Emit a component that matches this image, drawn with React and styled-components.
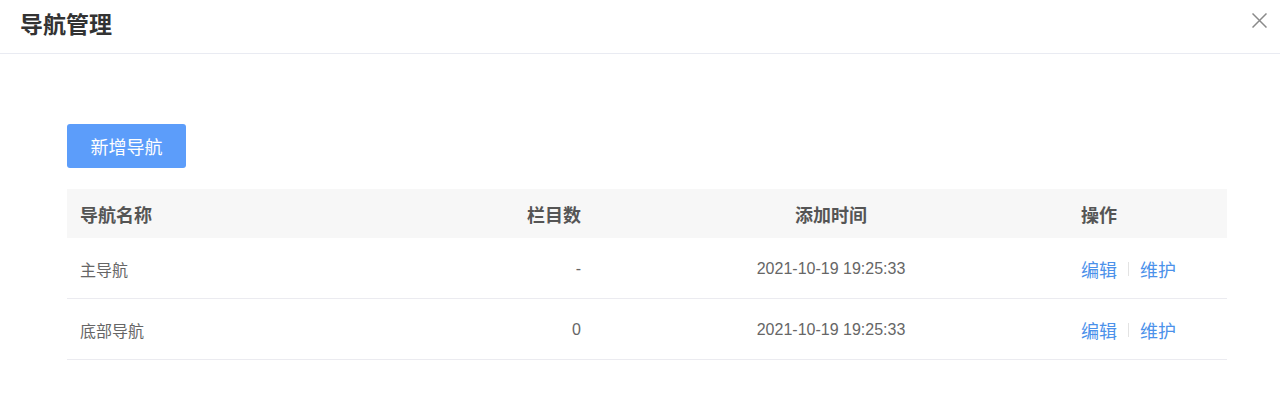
import styled, { createGlobalStyle } from "styled-components";

const GlobalStyle = createGlobalStyle`
    html, body {
        margin: 0;
        padding: 0;
        background: #ffffff;
    }
    body {
        font-family: "Liberation Sans", "Noto Sans CJK SC", sans-serif;
    }
`

const navList = [
    { id: 1, name: "主导航", count: "-", time: "2021-10-19 19:25:33" },
    { id: 2, name: "底部导航", count: "0", time: "2021-10-19 19:25:33" },
]

export default function App() {
    return (
        <>
            <GlobalStyle />
            <Page>
                <Header>
                    <Title>导航管理</Title>
                    <CloseButton aria-label="关闭">
                        <svg width="15" height="15" viewBox="0 0 15 15">
                            <path d="M0.5 0.5 L14.5 14.5 M14.5 0.5 L0.5 14.5" stroke="#8a8a8a" strokeWidth="1.5" fill="none" />
                        </svg>
                    </CloseButton>
                </Header>
                <Body>
                    <AddButton>新增导航</AddButton>
                    <Table>
                        <HeadRow>
                            <Cell>导航名称</Cell>
                            <Cell align="right">栏目数</Cell>
                            <Cell align="center">添加时间</Cell>
                            <Cell>操作</Cell>
                        </HeadRow>
                        {navList.map((n) => (
                            <Row key={n.id}>
                                <Cell>{n.name}</Cell>
                                <Cell align="right">{n.count}</Cell>
                                <Cell align="center">{n.time}</Cell>
                                <Cell>
                                    <Action>编辑</Action>
                                    <Divider />
                                    <Action>维护</Action>
                                </Cell>
                            </Row>
                        ))}
                    </Table>
                </Body>
            </Page>
        </>
    )
}

const Page = styled.div`
    width: 1280px;
    height: 417px;
    background: #fff;
`

const Header = styled.header`
    height: 53px;
    border-bottom: 1px solid #e9ebf2;
    display: flex;
    align-items: center;
    justify-content: space-between;
    padding: 0 13px 0 20px;
`

const Title = styled.h1`
    margin: 0;
    font-size: 23px;
    font-weight: 700;
    color: #333;
    font-family: "Noto Sans CJK SC", sans-serif;
    line-height: 1;
    padding-bottom: 6px;
`

const CloseButton = styled.button`
    border: none;
    background: none;
    padding: 0;
    width: 15px;
    height: 15px;
    margin-bottom: 13px;
    display: flex;
`

const Body = styled.div`
    padding: 70px 53px 0 67px;
`

const AddButton = styled.button`
    width: 119px;
    height: 44px;
    border: none;
    border-radius: 3px;
    background: #5c9dfa;
    color: #fff;
    font-size: 18px;
    font-family: "Noto Sans CJK SC", sans-serif;
    padding: 0;
    cursor: pointer;
`

const Table = styled.div`
    margin-top: 21px;
    width: 1160px;
`

const HeadRow = styled.div`
    display: grid;
    grid-template-columns: 263px 264px 474px 159px;
    height: 49px;
    align-items: center;
    background: #f7f7f7;
    font-size: 18px;
    font-weight: 700;
    color: #555;
    font-family: "Noto Sans CJK SC", sans-serif;
`

const Row = styled.div`
    display: grid;
    grid-template-columns: 263px 264px 474px 159px;
    height: 61px;
    align-items: center;
    border-bottom: 1px solid #ebebf0;
    font-size: 16px;
    color: #666;
    padding-top: 1px;
    box-sizing: border-box;
`

const Cell = styled.div`
    padding: 0 13px;
    text-align: ${(p) => p.align || "left"};
    display: flex;
    align-items: center;
    justify-content: ${(p) => (p.align === "right" ? "flex-end" : p.align === "center" ? "center" : "flex-start")};
`

const Action = styled.a`
    color: #4b91ea;
    font-size: 18px;
    cursor: pointer;
    font-family: "Noto Sans CJK SC", sans-serif;
`

const Divider = styled.span`
    width: 1px;
    height: 14px;
    background: #e3e3e3;
    margin: 0 11px;
`
